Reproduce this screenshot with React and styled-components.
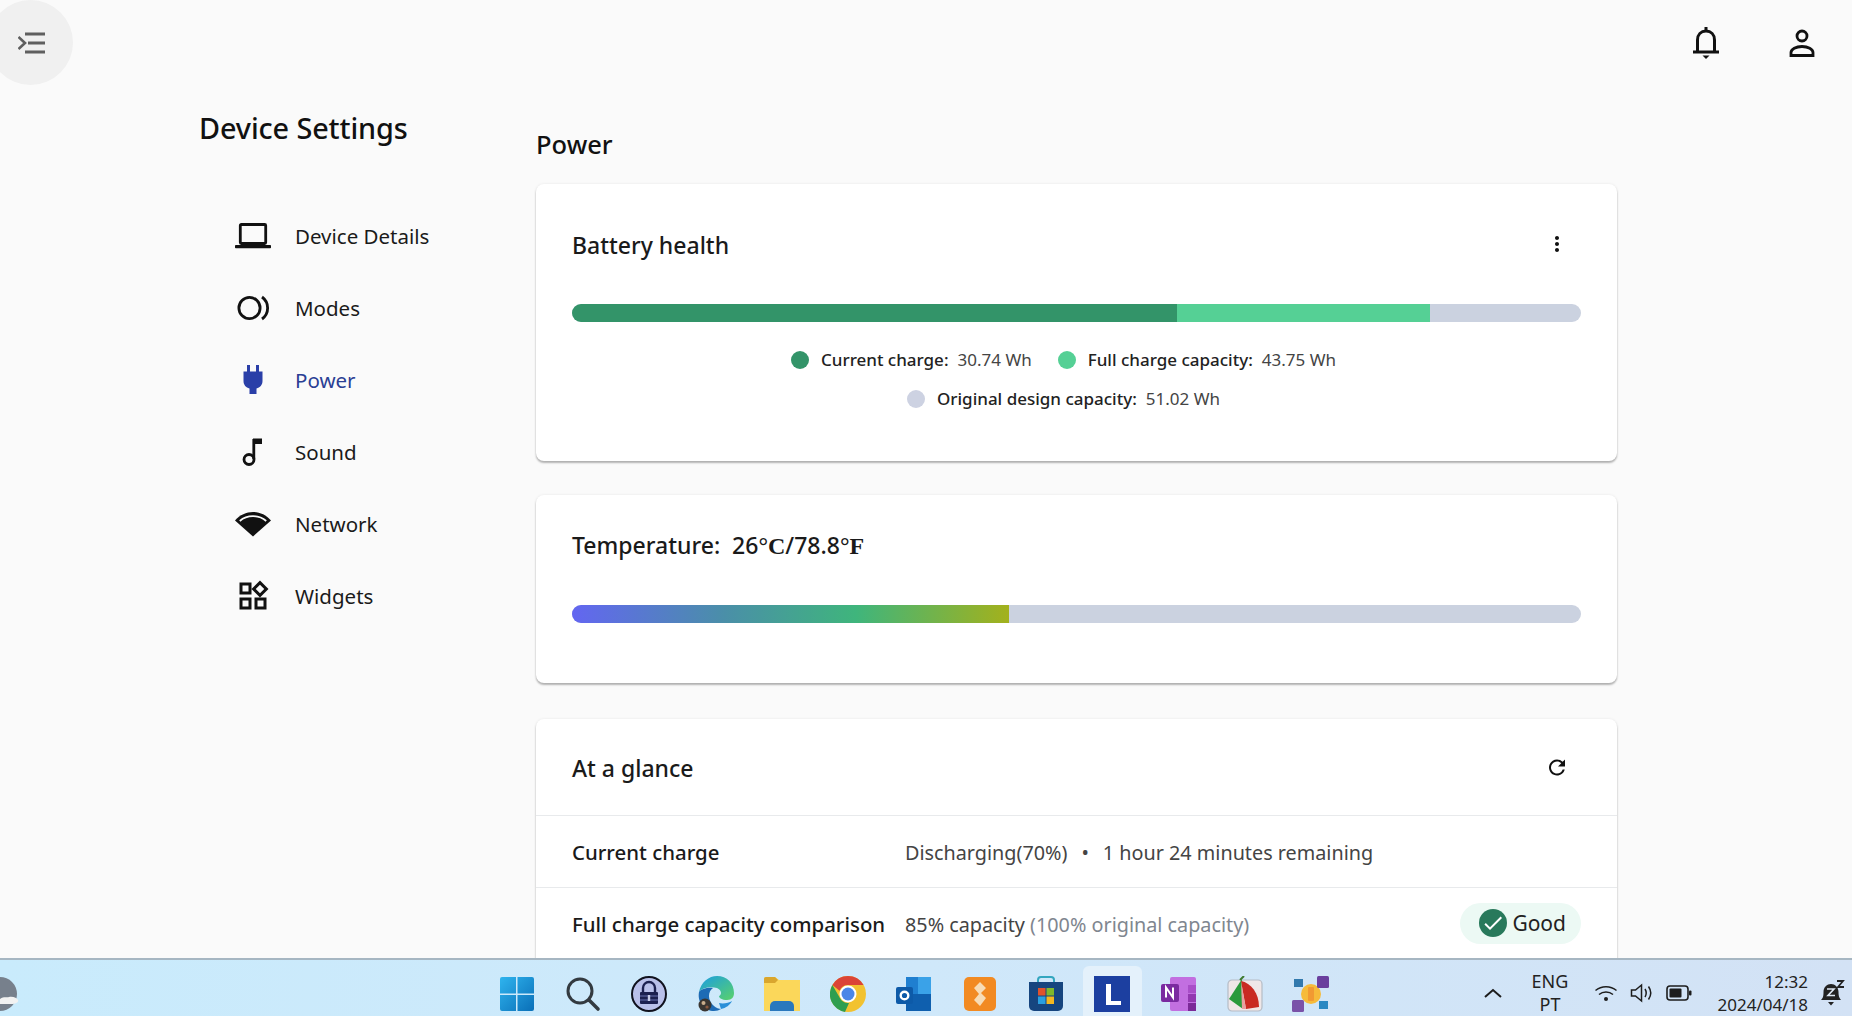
import React from "react";
import styled, { createGlobalStyle } from "styled-components";
import { MdOutlineWidgets, MdMoreVert, MdRefresh, MdCheck } from "react-icons/md";

const GlobalStyle = createGlobalStyle`
  html, body {
    margin: 0;
    padding: 0;
    height: 100%;
    overflow: hidden;
    background: #fafafa;
    font-family: "Noto Sans", "Open Sans", sans-serif;
    color: #1a1a1a;
  }
  * { box-sizing: border-box; }
`;

const NAV = [
  { label: "Device Details", icon: <LaptopIcon /> },
  { label: "Modes", icon: <ModesIcon /> },
  { label: "Power", icon: <PlugIcon />, active: true },
  { label: "Sound", icon: <NoteIcon /> },
  { label: "Network", icon: <NetworkIcon /> },
  { label: "Widgets", icon: <MdOutlineWidgets size={36} /> },
];

const TASK_ICONS = [
  <WindowsLogo />,
  <SearchLogo />,
  <LockLogo />,
  <EdgeLogo />,
  <FolderLogo />,
  <ChromeLogo />,
  <OutlookLogo />,
  <OrangeLogo />,
  <StoreLogo />,
  <LLogo />,
  <OneNoteLogo />,
  <PieLogo />,
  <CubesLogo />,
];

export default function App() {
  return (
    <Page>
      <GlobalStyle />
      <Main>
        <TopBar>
          <MenuButton>
            <MenuIcon />
          </MenuButton>
          <TopActions>
            <BellIcon />
            <PersonIcon />
          </TopActions>
        </TopBar>
        <Body>
          <Sidebar>
            <SideTitle>Device Settings</SideTitle>
            <nav>
              {NAV.map((item) => (
                <NavRow key={item.label} $active={item.active}>
                  <NavIcon>{item.icon}</NavIcon>
                  {item.label}
                </NavRow>
              ))}
            </nav>
          </Sidebar>
          <Content>
            <Heading>Power</Heading>
            <BatteryCard>
              <CardTitleRow>
                <CardTitle>Battery health</CardTitle>
                <CardAction $lift={3}>
                  <MdMoreVert size={24} />
                </CardAction>
              </CardTitleRow>
              <BatteryBar>
                <Segment $width={605} $color="#339469" />
                <Segment $width={253} $color="#55d095" />
              </BatteryBar>
              <Legend>
                <LegendRow>
                  <LegendItem color="#339469" label="Current charge:" value="30.74 Wh" />
                  <LegendItem color="#55d095" label="Full charge capacity:" value="43.75 Wh" />
                </LegendRow>
                <LegendRow>
                  <LegendItem color="#cdd2e2" label="Original design capacity:" value="51.02 Wh" />
                </LegendRow>
              </Legend>
            </BatteryCard>
            <TempCard>
              <CardTitle>
                Temperature:&nbsp; 26<Unit>°C</Unit>/78.8<Unit>°F</Unit>
              </CardTitle>
              <TempBar>
                <TempFill />
              </TempBar>
            </TempCard>
            <GlanceCard>
              <GlanceHeader>
                <CardTitle>At a glance</CardTitle>
                <CardAction $lift={0}>
                  <MdRefresh size={25} />
                </CardAction>
              </GlanceHeader>
              <GlanceRow>
                <GlanceLabel>Current charge</GlanceLabel>
                <GlanceValue>
                  Discharging(70%)<Bullet>•</Bullet>1 hour 24 minutes remaining
                </GlanceValue>
              </GlanceRow>
              <GlanceRow>
                <GlanceLabel>Full charge capacity comparison</GlanceLabel>
                <GlanceValue>
                  85% capacity <Muted>(100% original capacity)</Muted>
                </GlanceValue>
                <GoodBadge>
                  <CheckDot>
                    <MdCheck size={24} />
                  </CheckDot>
                  Good
                </GoodBadge>
              </GlanceRow>
            </GlanceCard>
          </Content>
        </Body>
      </Main>
      <Taskbar>
        <WeatherSlot>
          <WeatherLogo />
        </WeatherSlot>
        <TaskIcons>
          {TASK_ICONS.map((icon, i) => (
            <TaskCell key={i} $active={i === 9}>
              {icon}
            </TaskCell>
          ))}
        </TaskIcons>
        <Tray>
          <ChevronUp />
          <LangBlock>
            ENG
            <br />
            PT
          </LangBlock>
          <TrayIcons>
            <WifiTray />
            <SpeakerTray />
            <BatteryTray />
          </TrayIcons>
          <Clock>
            12:32
            <br />
            2024/04/18
          </Clock>
          <SleepSlot>
            <SleepBell />
          </SleepSlot>
        </Tray>
      </Taskbar>
    </Page>
  );
}

function LegendItem({ color, label, value }) {
  return (
    <LegendEntry>
      <Dot $color={color} />
      <LegendLabel>{label}</LegendLabel>
      <LegendValue>{value}</LegendValue>
    </LegendEntry>
  );
}

/* page icons */
function MenuIcon() {
  return (
    <svg width="30" height="24" viewBox="0 0 30 24" fill="none" stroke="#5f5f5f" strokeWidth="3">
      <path d="M7 3h20M10 12h17M7 21h20" />
      <path d="M0.500 6 7 12l-6.500 6" strokeWidth="2.600" />
    </svg>
  );
}

function BellIcon() {
  return (
    <svg width="28" height="34" viewBox="0 0 28 34" fill="none" stroke="#111" strokeWidth="3">
      <path d="M1 26h26" />
      <path d="M5.500 26V14c0-5.500 3.500-9 8.500-9s8.500 3.500 8.500 9v12" />
      <path d="M14 1v4" />
      <path d="M10.500 29.500h7L14 33z" fill="#111" stroke="none" />
    </svg>
  );
}

function PersonIcon() {
  return (
    <svg width="26" height="28" viewBox="0 0 26 28" fill="none" stroke="#111" strokeWidth="2.800">
      <circle cx="13" cy="7" r="5" />
      <path d="M2 26.500v-3c0-3.500 5-6 11-6s11 2.500 11 6v3z" />
    </svg>
  );
}

function LaptopIcon() {
  return (
    <svg width="36" height="26" viewBox="0 0 36 26" fill="none">
      <rect x="5.300" y="1.500" width="25.400" height="19" rx="1" stroke="#111" strokeWidth="2.800" />
      <rect x="0" y="22" width="36" height="3.200" rx="0.800" fill="#111" />
    </svg>
  );
}

function ModesIcon() {
  return (
    <svg width="36" height="26" viewBox="0 0 36 26" fill="none" stroke="#111" strokeWidth="2.800">
      <circle cx="14.500" cy="13" r="10.600" />
      <path d="M27 2c7.500 5.500 7.500 16.500 0 22" />
    </svg>
  );
}

function PlugIcon() {
  return (
    <svg width="22" height="30" viewBox="0 0 22 30" fill="#2a3fa8">
      <rect x="5" y="0" width="3" height="7" />
      <rect x="14" y="0" width="3" height="7" />
      <path d="M1.500 6.500h19V16c0 4-2.500 6.500-6 7.500V29h-7v-5.500C4 22.500 1.500 20 1.500 16z" />
    </svg>
  );
}

function NoteIcon() {
  return (
    <svg width="22" height="30" viewBox="0 0 22 30">
      <circle cx="7" cy="22.500" r="5" fill="none" stroke="#111" strokeWidth="2.800" />
      <rect x="10.400" y="2" width="2.800" height="20" fill="#111" />
      <rect x="11" y="1.500" width="9" height="5.500" fill="#111" />
    </svg>
  );
}

function NetworkIcon() {
  return (
    <svg width="36" height="26" viewBox="0 0 36 26">
      <path d="M0 9.500C9.500-2 26.500-2 36 9.500L18 25.500z" fill="#111" />
      <path d="M4.800 10C12 3.500 24 3.500 31.200 10" fill="none" stroke="#fafafa" strokeWidth="1.800" />
    </svg>
  );
}

/* taskbar logos, drawn at 36 */
function WindowsLogo() {
  return (
    <svg width="36" height="36" viewBox="0 0 36 36">
      <defs>
        <linearGradient id="winBlue" x1="0" y1="0" x2="1" y2="1">
          <stop offset="0" stopColor="#2fb4ee" />
          <stop offset="1" stopColor="#0a6fb8" />
        </linearGradient>
      </defs>
      <path d="M1 3a2 2 0 0 1 2-2h14v16.500H1zM18.500 1H33a2 2 0 0 1 2 2v14.500H18.500zM1 19h16v16H3a2 2 0 0 1-2-2zM18.500 19H35v14a2 2 0 0 1-2 2H18.500z" fill="url(#winBlue)" />
    </svg>
  );
}

function SearchLogo() {
  return (
    <svg width="36" height="36" viewBox="0 0 36 36" fill="none" stroke="#333a40" strokeLinecap="round">
      <circle cx="15" cy="15" r="12" strokeWidth="3" />
      <path d="M24 24l9 9" strokeWidth="3.600" />
    </svg>
  );
}

function LockLogo() {
  return (
    <svg width="36" height="36" viewBox="0 0 36 36">
      <circle cx="18" cy="18" r="17" fill="#b9c0ea" stroke="#10121e" strokeWidth="2" />
      <path d="M12 16v-4a6 6 0 0 1 12 0v4" fill="none" stroke="#1c2050" strokeWidth="2.400" />
      <rect x="9" y="16" width="18" height="12" rx="1" fill="#1c2050" />
      <path d="M9 20h18M9 24h18" stroke="#6870b0" strokeWidth="1" />
      <rect x="16.800" y="19" width="2.400" height="6" fill="#c8cce8" />
    </svg>
  );
}

function EdgeLogo() {
  return (
    <svg width="38" height="36" viewBox="0 0 38 36">
      <defs>
        <linearGradient id="edgeGreen" x1="0" y1="0" x2="1" y2="1">
          <stop offset="0" stopColor="#1b9de2" />
          <stop offset="1" stopColor="#5ad26a" />
        </linearGradient>
      </defs>
      <path d="M2 16C4 6 12 0 20 0c10 0 17 7 17 17 0 4-2 7-7 7s-8-2-8-4c3-1 3-6-2-8C13 10 5 12 2 16z" fill="url(#edgeGreen)" />
      <path d="M2 16c2-3 9-5 14-4-5 3-6 12 1 18 2 2 5 3 7 3-2 1-4 2-7 2C8 35 0 27 2 16z" fill="#1d6bb5" />
      <path d="M24 33c5-1 9-4 11-8-3 2-9 3-13 2z" fill="#2a8fd8" />
      <circle cx="8" cy="29" r="6.500" fill="#3a3632" />
      <circle cx="6.500" cy="27" r="2" fill="#c9ad8c" />
      <circle cx="10" cy="31" r="1.600" fill="#8b5a40" />
    </svg>
  );
}

function FolderLogo() {
  return (
    <svg width="38" height="36" viewBox="0 0 38 36">
      <path d="M1 3a2 2 0 0 1 2-2h9l4 3h21v31H1z" fill="#fbd75a" />
      <path d="M1 3a2 2 0 0 1 2-2h9l3 3-3 3H1z" fill="#d9a62e" />
      <path d="M7 35v-5a5 5 0 0 1 5-5h14a5 5 0 0 1 5 5v5z" fill="#2a78bd" />
    </svg>
  );
}

function ChromeLogo() {
  return (
    <svg width="36" height="36" viewBox="0 0 36 36">
      <circle cx="18" cy="18" r="18" fill="#f2c230" />
      <path d="M18 0a18 18 0 0 1 15.600 9H18a9 9 0 0 0-8.400 5.800L2.400 9A18 18 0 0 1 18 0z" fill="#db4437" />
      <path d="M2.400 9l7.800 13.500a9 9 0 0 0 8.800 4.400L15 36A18 18 0 0 1 2.400 9z" fill="#2f9e50" />
      <circle cx="18" cy="18" r="8.500" fill="#fff" />
      <circle cx="18" cy="18" r="6.500" fill="#4a86e8" />
    </svg>
  );
}

function OutlookLogo() {
  return (
    <svg width="36" height="36" viewBox="0 0 36 36">
      <rect x="10" y="1" width="25" height="17" fill="#1f7fd0" />
      <rect x="10" y="18" width="25" height="17" fill="#0f5fae" />
      <rect x="22" y="1" width="13" height="17" fill="#3aa2e8" />
      <rect x="0" y="11" width="17" height="17" rx="2" fill="#0d5aa8" />
      <circle cx="8.500" cy="19.500" r="3.800" fill="none" stroke="#fff" strokeWidth="2.400" />
    </svg>
  );
}

function OrangeLogo() {
  return (
    <svg width="36" height="36" viewBox="0 0 36 36">
      <rect x="2" y="1" width="32" height="34" rx="5" fill="#f28a22" />
      <path d="M18 6l6 6-5 5 5 5-6 8-6-6 5-6-5-6z" fill="#f7dcb6" />
    </svg>
  );
}

function StoreLogo() {
  return (
    <svg width="36" height="36" viewBox="0 0 36 36">
      <path d="M10 6V4a3 3 0 0 1 3-3h10a3 3 0 0 1 3 3v2" fill="none" stroke="#33a6bf" strokeWidth="2" />
      <path d="M1 6h34v24a5 5 0 0 1-5 5H6a5 5 0 0 1-5-5z" fill="#16457f" />
      <rect x="10" y="12" width="7.500" height="7.500" fill="#e0522c" />
      <rect x="18.500" y="12" width="7.500" height="7.500" fill="#7fb82c" />
      <rect x="10" y="20.500" width="7.500" height="7.500" fill="#2a9fe0" />
      <rect x="18.500" y="20.500" width="7.500" height="7.500" fill="#f4b820" />
    </svg>
  );
}

function LLogo() {
  return (
    <svg width="36" height="36" viewBox="0 0 36 36">
      <rect width="36" height="36" fill="#1c3fa0" />
      <path d="M12 8h5v17h10v4H12z" fill="#fff" />
    </svg>
  );
}

function OneNoteLogo() {
  return (
    <svg width="36" height="36" viewBox="0 0 36 36">
      <rect x="9" y="1" width="26" height="34" rx="2" fill="#c26fe0" />
      <rect x="27" y="9" width="8" height="8" fill="#a94fc8" />
      <rect x="27" y="18" width="8" height="8" fill="#9238b0" />
      <rect x="27" y="27" width="8" height="8" fill="#7b2a98" />
      <rect x="0" y="8" width="18" height="18" rx="2" fill="#7a2aa0" />
      <path d="M5 21.500v-10l7 10v-10" fill="none" stroke="#fff" strokeWidth="2" />
    </svg>
  );
}

function PieLogo() {
  return (
    <svg width="36" height="36" viewBox="0 0 36 36">
      <rect x="1" y="4" width="34" height="31" rx="4" fill="#efe7e8" stroke="#b5bcc6" strokeWidth="1.200" />
      <path d="M15 3L2 23l14 10z" fill="#2a9a3c" />
      <path d="M14 5c10 2 18 12 18 26l-13 2z" fill="#c92a22" />
      <path d="M14 5l5 28h-4z" fill="#e8a0a0" />
      <path d="M13 4l4-4" stroke="#3e7a30" strokeWidth="2" />
    </svg>
  );
}

function CubesLogo() {
  return (
    <svg width="38" height="36" viewBox="0 0 38 36">
      <circle cx="19" cy="18" r="10" fill="#f6bb3a" />
      <rect x="16" y="11" width="6" height="14" rx="1" fill="#f19a32" />
      <rect x="2" y="3" width="9" height="8" fill="#3279ad" />
      <rect x="25" y="0" width="12" height="12" rx="1.500" fill="#6a3f9e" />
      <rect x="0" y="24" width="12" height="12" rx="1.500" fill="#7a52a8" />
      <rect x="27" y="25" width="9" height="8" fill="#2a88c2" />
    </svg>
  );
}

function WeatherLogo() {
  return (
    <svg width="34" height="36" viewBox="0 0 34 36">
      <circle cx="0" cy="18" r="17" fill="#77808c" />
      <path d="M0 23c4-3 7-1 9-2 4-1 8 1 9 3s-2 4-7 4H0z" fill="#f2f2f2" />
    </svg>
  );
}

function ChevronUp() {
  return (
    <svg width="20" height="12" viewBox="0 0 20 12" fill="none" stroke="#1d1d1d" strokeWidth="2">
      <path d="M2 10l8-7 8 7" />
    </svg>
  );
}

function WifiTray() {
  return (
    <svg width="24" height="20" viewBox="0 0 24 20" fill="none" stroke="#1d1d1d" strokeWidth="1.500">
      <path d="M1.500 7.500c6-5 15-5 21 0" />
      <path d="M5 11.500c4-3.500 10-3.500 14 0" />
      <circle cx="12" cy="16" r="2" fill="#1d1d1d" stroke="none" />
    </svg>
  );
}

function SpeakerTray() {
  return (
    <svg width="24" height="22" viewBox="0 0 24 22" fill="none" stroke="#1d1d1d" strokeWidth="1.500">
      <path d="M1.500 8v6h4l6 5V3l-6 5z" />
      <path d="M15 7c1.500 2.500 1.500 5.500 0 8M18.500 4.500c2.800 4 2.800 9 0 13" />
    </svg>
  );
}

function BatteryTray() {
  return (
    <svg width="26" height="16" viewBox="0 0 26 16">
      <rect x="1" y="1" width="21" height="14" rx="3" fill="none" stroke="#1d1d1d" strokeWidth="1.600" />
      <rect x="3.500" y="3.500" width="12" height="9" rx="1" fill="#1d1d1d" />
      <rect x="23" y="5.500" width="2.500" height="5" rx="1" fill="#1d1d1d" />
    </svg>
  );
}

function SleepBell() {
  return (
    <svg width="24" height="26" viewBox="0 0 24 26">
      <path d="M0 20c2-2 2.500-3.500 2.500-8 0-5 3.500-8 7.500-8s7.500 3 7.500 8c0 4.500 1 6 2.500 8z" fill="#222" />
      <path d="M7 22h6l-3 3.500z" fill="#222" />
      <path d="M6 9h7l-6 6.500h7" fill="none" stroke="#dfe9f5" strokeWidth="1.600" />
      <path d="M16 1h6l-5 6h6" fill="none" stroke="#222" strokeWidth="1.800" />
    </svg>
  );
}

const Page = styled.div`
  display: flex;
  flex-direction: column;
  height: 100vh;
  overflow: hidden;
`;

const Main = styled.main`
  flex: 1;
  min-height: 0;
  overflow: hidden;
  background: #fafafa;
`;

const TopBar = styled.header`
  display: flex;
  align-items: flex-start;
  justify-content: space-between;
  height: 85px;
  margin-left: -12px;
`;

const MenuButton = styled.button`
  display: flex;
  align-items: center;
  justify-content: center;
  width: 85px;
  height: 85px;
  padding: 0 0 0 4px;
  border: 0;
  border-radius: 50%;
  background: #f0f0f0;
`;

const TopActions = styled.div`
  display: flex;
  align-items: center;
  gap: 69px;
  height: 85px;
  padding-right: 37px;
`;

const Body = styled.div`
  display: flex;
  padding-left: 200px;
`;

const Sidebar = styled.aside`
  flex: 0 0 336px;
`;

const SideTitle = styled.h2`
  margin: 0 0 29px -1px;
  font-size: 28.8px;
  font-weight: 500;
  line-height: 86px;
  letter-spacing: -0.1px;
  color: #111;
`;

const NavRow = styled.a`
  display: flex;
  align-items: center;
  gap: 22px;
  height: 72px;
  padding-left: 33px;
  font-size: 20.5px;
  color: ${(p) => (p.$active ? "#2a3f94" : "#1a1a1a")};
`;

const NavIcon = styled.span`
  display: flex;
  align-items: center;
  justify-content: center;
  width: 40px;
  height: 40px;
  color: #111;
`;

const Content = styled.section`
  flex: 0 0 1081px;
  display: flex;
  flex-direction: column;
`;

const Heading = styled.h1`
  margin: 0 0 16px;
  padding-top: 35px;
  font-size: 25.5px;
  font-weight: 500;
  line-height: 48px;
  color: #111;
`;

const Card = styled.div`
  background: #fff;
  border-radius: 8px;
  box-shadow: 0 2px 2px rgba(0, 0, 0, 0.28), 0 0 3px rgba(0, 0, 0, 0.08);
`;

const BatteryCard = styled(Card)`
  padding: 35px 36px 43px;
  margin-bottom: 34px;
`;

const TempCard = styled(Card)`
  padding: 24px 36px 60px;
  margin-bottom: 36px;
`;

const GlanceCard = styled(Card)`
  padding-bottom: 30px;
`;

const CardTitleRow = styled.div`
  display: flex;
  align-items: center;
  justify-content: space-between;
  height: 52px;
`;

const CardTitle = styled.h3`
  margin: 0;
  font-size: 23px;
  font-weight: 500;
  line-height: 52px;
  color: #1a1a1a;
`;

const Unit = styled.span`
  font-family: "Liberation Serif", serif;
  font-weight: 700;
  font-size: 24px;
`;

const CardAction = styled.span`
  display: flex;
  align-items: center;
  justify-content: center;
  width: 24px;
  height: 24px;
  margin-right: 12px;
  margin-top: ${(p) => -p.$lift}px;
  color: #111;
`;

const Track = styled.div`
  display: flex;
  height: 18px;
  border-radius: 9px;
  overflow: hidden;
  background: #cbd2e0;
`;

const BatteryBar = styled(Track)`
  margin-top: 33px;
`;

const Segment = styled.div`
  width: ${(p) => p.$width}px;
  background: ${(p) => p.$color};
`;

const TempBar = styled(Track)`
  margin-top: 33px;
`;

const TempFill = styled.div`
  width: 437px;
  background: linear-gradient(90deg, #6366f1 0%, #4a8fa8 35%, #3fb57c 65%, #a3b11c 100%);
`;

const Legend = styled.div`
  margin-top: 18px;
`;

const LegendRow = styled.div`
  display: flex;
  justify-content: center;
  height: 39px;
`;

const LegendEntry = styled.div`
  display: flex;
  align-items: center;
  margin-right: 24px;
  font-size: 17px;
`;

const Dot = styled.span`
  width: 18px;
  height: 18px;
  margin-right: 12px;
  border-radius: 50%;
  background: ${(p) => p.$color};
`;

const LegendLabel = styled.span`
  margin-right: 9px;
  font-weight: 500;
  color: #222;
`;

const LegendValue = styled.span`
  margin-right: 2px;
  color: #444;
`;

const GlanceHeader = styled.div`
  display: flex;
  align-items: center;
  justify-content: space-between;
  height: 96px;
  padding: 1px 36px 0;
`;

const GlanceRow = styled.div`
  display: flex;
  align-items: center;
  height: 72px;
  padding: 1px 36px 0;
  border-top: 1px solid #e8eaec;
`;

const GlanceLabel = styled.span`
  flex: 0 0 333px;
  font-size: 20.4px;
  font-weight: 500;
  color: #1a1a1a;
`;

const GlanceValue = styled.span`
  flex: 1;
  font-size: 19.8px;
  color: #444;
`;

const Bullet = styled.span`
  margin: 0 14px;
`;

const Muted = styled.span`
  color: #80868f;
`;

const GoodBadge = styled.span`
  display: flex;
  align-items: center;
  gap: 5px;
  height: 41px;
  margin-top: -2px;
  padding: 0 15px 0 19px;
  border-radius: 21px;
  background: #ecf9f4;
  font-size: 21px;
  color: #222;
`;

const CheckDot = styled.span`
  display: flex;
  align-items: center;
  justify-content: center;
  width: 28px;
  height: 28px;
  border-radius: 50%;
  background: #28795b;
  color: #fff;
`;

const Taskbar = styled.footer`
  display: grid;
  grid-template-columns: 484px 860px 1fr;
  flex: 0 0 58px;
  border-top: 2px solid #a6b6c2;
  overflow: hidden;
  background: linear-gradient(90deg, #c9ebfc 0%, #cfe8fa 50%, #d3e2f5 100%);
`;

const WeatherSlot = styled.div`
  padding-top: 16px;
`;

const TaskIcons = styled.div`
  display: grid;
  grid-template-columns: repeat(13, 1fr);
  align-self: end;
`;

const TaskCell = styled.div`
  display: flex;
  justify-content: center;
  height: 51px;
  margin: 0 ${(p) => (p.$active ? "4px" : "0")};
  padding-top: 10px;
  border-radius: 6px 6px 0 0;
  background: ${(p) => (p.$active ? "#e4f1fb" : "transparent")};
`;

const Tray = styled.div`
  display: flex;
  align-items: center;
  padding: 9px 0 0 139px;
  color: #222;
  font-size: 18px;
  line-height: 23px;
`;

const LangBlock = styled.div`
  width: 50px;
  margin-left: 22px;
  text-align: center;
`;

const TrayIcons = styled.div`
  display: flex;
  align-items: center;
  gap: 12px;
  margin-left: 19px;
`;

const Clock = styled.div`
  width: 110px;
  margin-left: 6px;
  font-size: 17px;
  text-align: right;
`;

const SleepSlot = styled.div`
  display: flex;
  margin-left: 13px;
`;
